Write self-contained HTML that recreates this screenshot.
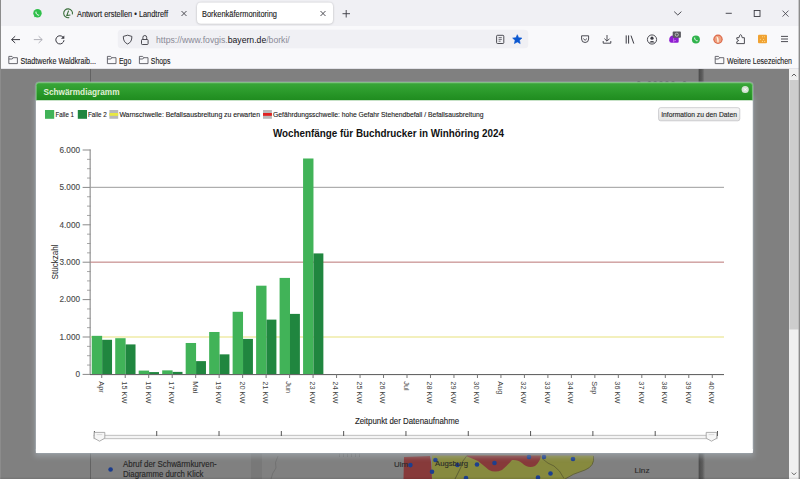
<!DOCTYPE html>
<html><head><meta charset="utf-8"><style>
html,body{margin:0;padding:0;width:800px;height:479px;overflow:hidden;background:#808080;font-family:"Liberation Sans", sans-serif;}
</style></head><body>
<svg width="800" height="479" viewBox="0 0 800 479" style='position:absolute;left:0;top:0;font-family:"Liberation Sans", sans-serif'><defs><filter id="tabsh" x="-10%" y="-30%" width="120%" height="160%"><feGaussianBlur stdDeviation="0.8"/></filter><filter id="msh" x="-5%" y="-5%" width="110%" height="110%"><feGaussianBlur stdDeviation="2.5"/></filter><linearGradient id="hdr" x1="0" y1="0" x2="0" y2="1"><stop offset="0" stop-color="#3aa83a"/><stop offset="0.5" stop-color="#2b9a2b"/><stop offset="1" stop-color="#1f8c1f"/></linearGradient><linearGradient id="btn" x1="0" y1="0" x2="0" y2="1"><stop offset="0" stop-color="#f8f8f8"/><stop offset="1" stop-color="#e4e4e4"/></linearGradient><linearGradient id="psh" x1="0" y1="0" x2="1" y2="0"><stop offset="0" stop-color="#5a5a5a"/><stop offset="0.15" stop-color="#4e4e4e"/><stop offset="0.6" stop-color="#5c5c5c"/><stop offset="1" stop-color="#7e7e7e"/></linearGradient></defs><rect x="0" y="0" width="800" height="26" fill="#f0f0f4"/><rect x="0" y="26" width="800" height="43" fill="#f9f9fb"/><rect x="0" y="68" width="800" height="1" fill="#e3e3e8"/><rect x="197" y="2.8" width="136" height="21.2" rx="4" fill="#000" opacity="0.25" filter="url(#tabsh)"/><rect x="197" y="2.6" width="136" height="21.2" rx="4" fill="#fff"/><circle cx="37.5" cy="13.3" r="4.2" fill="#2fbf4a"/><path d="M34.2 17.2 L34.9 14.8 L36.6 16.2 Z" fill="#2fbf4a"/><path d="M36 11.6 q-0.6 1.6 1.2 3 q1.4 1 2 0.4" stroke="#fff" stroke-width="1" fill="none"/><path d="M69.24 17.55 A4.4 4.4 0 1 1 72.35 14.44" fill="none" stroke="#3a6e3a" stroke-width="1.1"/><path d="M68.6 10.6 L66.8 15.6 L70.4 15.0" stroke="#3a6e3a" stroke-width="1.1" fill="none"/><text x="77" y="16.5" font-size="8.2" fill="#1c1b22" font-weight="normal" text-anchor="start" stroke="#1c1b22" stroke-width="0.12" textLength="91" lengthAdjust="spacingAndGlyphs" >Antwort erstellen • Landtreff</text><path d="M181.5 11 L186.5 16 M186.5 11 L181.5 16" stroke="#3a3a42" stroke-width="0.9"/><text x="202" y="16.5" font-size="8.2" fill="#1c1b22" font-weight="normal" text-anchor="start" stroke="#1c1b22" stroke-width="0.12" textLength="75" lengthAdjust="spacingAndGlyphs" >Borkenkäfermonitoring</text><path d="M320.5 11 L325.5 16 M325.5 11 L320.5 16" stroke="#3a3a42" stroke-width="0.9"/><path d="M342.5 13.7 L350 13.7 M346.2 10 L346.2 17.5" stroke="#3a3a42" stroke-width="0.9"/><path d="M674.2 11.6 L677.8 15 L681.4 11.6" stroke="#3a3a42" stroke-width="0.9" fill="none"/><path d="M725.7 13.3 L731.8 13.3" stroke="#3a3a42" stroke-width="0.9"/><rect x="754.2" y="10.5" width="5.8" height="6" fill="none" stroke="#3a3a42" stroke-width="0.9"/><path d="M782.5 10.6 L788.5 16.6 M788.5 10.6 L782.5 16.6" stroke="#3a3a42" stroke-width="0.8"/><path d="M20 39.6 L11.6 39.6 M15.2 36.2 L11.6 39.6 L15.2 43" stroke="#3a3a42" stroke-width="1" fill="none"/><path d="M33.8 39.6 L42.2 39.6 M38.6 36.2 L42.2 39.6 L38.6 43" stroke="#b0b0b8" stroke-width="1" fill="none"/><path d="M63.2 37.4 A4.1 4.1 0 1 0 64 40.2" stroke="#3a3a42" stroke-width="1" fill="none"/><path d="M64.3 35.4 L64.3 38.8 L60.9 38.8 Z" fill="#3a3a42"/><rect x="117.8" y="29.8" width="410.4" height="18.4" rx="3.5" fill="#f0f0f4"/><path d="M127.6 35.2 L123.3 36.4 Q123.2 42.2 127.6 44 Q132 42.2 131.9 36.4 Z" fill="none" stroke="#3a3a42" stroke-width="0.9"/><rect x="141.5" y="39.5" width="6.6" height="5" rx="0.8" fill="none" stroke="#3a3a42" stroke-width="0.9"/><path d="M142.9 39.5 L142.9 37.4 A1.9 1.9 0 0 1 146.7 37.4 L146.7 39.5" fill="none" stroke="#3a3a42" stroke-width="0.9"/><text x="156" y="42.5" font-size="8.7" fill="#8a8a96" textLength="133.8" lengthAdjust="spacingAndGlyphs">https://www.fovgis.<tspan fill="#15141a">bayern.de</tspan>/borki/</text><rect x="496.6" y="35.3" width="7.2" height="8.2" rx="0.9" fill="none" stroke="#3a3a42" stroke-width="0.9"/><path d="M498.6 37.6 L501.8 37.6 M498.6 39.4 L501.8 39.4 M498.6 41.2 L500.6 41.2" stroke="#3a3a42" stroke-width="0.7"/><polygon points="517.30,34.70 518.65,37.74 521.96,38.09 519.49,40.31 520.18,43.56 517.30,41.90 514.42,43.56 515.11,40.31 512.64,38.09 515.95,37.74" fill="#0b57d0" stroke="#0b57d0" stroke-width="0.6" stroke-linejoin="round"/><path d="M581.6 35.8 L588.6 35.8 L588.6 39 A3.5 3.5 0 0 1 581.6 39 Z" fill="none" stroke="#3a3a42" stroke-width="0.9" stroke-linejoin="round"/><path d="M583.3 38.6 L585.1 40.3 L586.9 38.6" fill="none" stroke="#3a3a42" stroke-width="0.9"/><path d="M607 35 L607 41 M604.4 38.6 L607 41.2 L609.6 38.6 M603.2 41 L603.2 43.2 L610.8 43.2 L610.8 41" fill="none" stroke="#3a3a42" stroke-width="0.9"/><path d="M626.2 35.4 L626.2 43.6 M628.6 35.4 L628.6 43.6 M631 35.6 L633.8 43.6" fill="none" stroke="#3a3a42" stroke-width="1"/><circle cx="652" cy="39.5" r="4.6" fill="none" stroke="#3a3a42" stroke-width="0.9"/><circle cx="652" cy="38.2" r="1.6" fill="#3a3a42"/><path d="M649.2 42.4 Q652 39.6 654.8 42.4 Z" fill="#3a3a42"/><path d="M669.2 40.2 Q669.2 35.6 673.2 35.6 L678.7 35.6 L678.7 41.4 Q678.7 42.7 677.4 42.7 L671.4 42.7 Q669.2 42.7 669.2 40.2 Z" fill="#8e1ed0"/><path d="M673.6 38.2 L673.6 42.4 M673.6 41 L676 40.4" stroke="#d888f4" stroke-width="0.7"/><rect x="672.7" y="31.6" width="8.2" height="6.2" rx="0.8" fill="#5a5a5f"/><circle cx="676.8" cy="34.7" r="1.6" fill="none" stroke="#d8d8d8" stroke-width="0.7"/><circle cx="695.9" cy="39.4" r="4" fill="#30b34c"/><path d="M694.7 37.5 q-0.5 1.6 1.1 2.9 q1.3 0.9 1.9 0.3" stroke="#fff" stroke-width="0.9" fill="none"/><circle cx="718" cy="39.2" r="4.7" fill="#dc6a4a"/><circle cx="718" cy="39.2" r="3.5" fill="#eea080"/><path d="M716.8 36.4 Q719.2 37.2 718.6 42.4 L717.4 42.4 Q717.2 38.8 716.4 36.8 Z" fill="#fff4e0"/><path d="M736.8 43.6 L744.4 43.6 L744.4 37.7 L742.2 37.7 L741.5 35.3 Q740.6 34 739.7 35.3 L739 37.7 L736.8 37.7 L736.8 39.3 L738.7 40.5 L736.8 41.7 Z" fill="none" stroke="#3a3a42" stroke-width="0.9" stroke-linejoin="round"/><rect x="758" y="34.7" width="9" height="8.6" rx="1" fill="#f0a232"/><circle cx="762.5" cy="36.8" r="0.55" fill="#ffdc90"/><circle cx="764.4" cy="36.8" r="0.55" fill="#ffdc90"/><circle cx="760.4" cy="39.3" r="0.55" fill="#ffdc90"/><circle cx="763.6" cy="39.5" r="0.55" fill="#ffdc90"/><circle cx="762.4" cy="41.4" r="0.55" fill="#ffdc90"/><circle cx="764.7" cy="41.4" r="0.55" fill="#ffdc90"/><path d="M781 36.4 L788 36.4 M781 39 L788 39 M781 41.6 L788 41.6" stroke="#3a3a42" stroke-width="0.9"/><path d="M8.8 63.6 L8.8 56.4 L12.0 56.4 L13.200000000000001 57.699999999999996 L17.4 57.699999999999996 L17.4 63.6 Z M8.8 59.0 L12.200000000000001 59.0 L13.200000000000001 57.699999999999996" fill="none" stroke="#505058" stroke-width="0.85" stroke-linejoin="round"/><text x="20.5" y="63.7" font-size="8.9" fill="#1c1b22" font-weight="normal" text-anchor="start" stroke="#1c1b22" stroke-width="0.12" textLength="75.5" lengthAdjust="spacingAndGlyphs" >Stadtwerke Waldkraib...</text><path d="M107.4 63.6 L107.4 56.4 L110.60000000000001 56.4 L111.80000000000001 57.699999999999996 L116.0 57.699999999999996 L116.0 63.6 Z M107.4 59.0 L110.80000000000001 59.0 L111.80000000000001 57.699999999999996" fill="none" stroke="#505058" stroke-width="0.85" stroke-linejoin="round"/><text x="118.9" y="63.7" font-size="8.9" fill="#1c1b22" font-weight="normal" text-anchor="start" stroke="#1c1b22" stroke-width="0.12" textLength="12.4" lengthAdjust="spacingAndGlyphs" >Ego</text><path d="M139.4 63.6 L139.4 56.4 L142.6 56.4 L143.8 57.699999999999996 L148.0 57.699999999999996 L148.0 63.6 Z M139.4 59.0 L142.8 59.0 L143.8 57.699999999999996" fill="none" stroke="#505058" stroke-width="0.85" stroke-linejoin="round"/><text x="150.8" y="63.7" font-size="8.9" fill="#1c1b22" font-weight="normal" text-anchor="start" stroke="#1c1b22" stroke-width="0.12" textLength="19.6" lengthAdjust="spacingAndGlyphs" >Shops</text><path d="M715.2 63.6 L715.2 56.4 L718.4000000000001 56.4 L719.6 57.699999999999996 L723.8000000000001 57.699999999999996 L723.8000000000001 63.6 Z M715.2 59.0 L718.6 59.0 L719.6 57.699999999999996" fill="none" stroke="#505058" stroke-width="0.85" stroke-linejoin="round"/><text x="727" y="63.7" font-size="8.9" fill="#1c1b22" font-weight="normal" text-anchor="start" stroke="#1c1b22" stroke-width="0.12" textLength="65" lengthAdjust="spacingAndGlyphs" >Weitere Lesezeichen</text><rect x="0" y="69" width="800" height="410" fill="#808080"/><rect x="90" y="69" width="0.8" height="14" fill="#5a5a5a"/><ellipse cx="638.8" cy="82.6" rx="1.9" ry="1.5" fill="#3c3c3c" opacity="0.75"/><ellipse cx="649.5" cy="82.6" rx="1.9" ry="1.5" fill="#3c3c3c" opacity="0.75"/><ellipse cx="655.2" cy="82.6" rx="1.9" ry="1.5" fill="#3c3c3c" opacity="0.75"/><ellipse cx="661" cy="82.6" rx="1.9" ry="1.5" fill="#3c3c3c" opacity="0.75"/><ellipse cx="667" cy="82.6" rx="1.9" ry="1.5" fill="#3c3c3c" opacity="0.75"/><ellipse cx="673" cy="82.6" rx="1.9" ry="1.5" fill="#3c3c3c" opacity="0.75"/><ellipse cx="684.5" cy="82.6" rx="1.9" ry="1.5" fill="#3c3c3c" opacity="0.75"/><rect x="698.5" y="69" width="6" height="14" fill="url(#psh)"/><rect x="90" y="453" width="0.8" height="26" fill="#5a5a5a"/><circle cx="110.6" cy="469.5" r="2.3" fill="#1b3c8c"/><text x="123" y="467.4" font-size="8.6" fill="#262626" font-weight="normal" text-anchor="start" stroke="#262626" stroke-width="0.12" textLength="93.7" lengthAdjust="spacingAndGlyphs" >Abruf der Schwärmkurven-</text><text x="123" y="477.4" font-size="8.6" fill="#262626" font-weight="normal" text-anchor="start" stroke="#262626" stroke-width="0.12" textLength="80.5" lengthAdjust="spacingAndGlyphs" >Diagramme durch Klick</text><rect x="251" y="453" width="11" height="26" fill="#787878"/><rect x="698.5" y="453" width="6.5" height="26" fill="url(#psh)"/><rect x="339" y="453.5" width="1" height="3.5" fill="#404040" opacity="0.25"/><rect x="343" y="453.5" width="1" height="3.5" fill="#404040" opacity="0.25"/><rect x="347" y="453.5" width="1" height="3.5" fill="#404040" opacity="0.25"/><rect x="351" y="453.5" width="1" height="3.5" fill="#404040" opacity="0.25"/><rect x="355" y="453.5" width="1" height="3.5" fill="#404040" opacity="0.25"/><rect x="359" y="453.5" width="1" height="3.5" fill="#404040" opacity="0.25"/><path d="M432 479 L432 455.5 L593.5 455.5 Q595 466 585 470 Q572 474 565 479 Z" fill="#878a3e"/><path d="M403.5 479 L404 457 L430 456 L431 462 L432 479 Z" fill="#873a3a"/><path d="M467 455.5 L541 455.5 Q540 462 535 466 Q528 469 522 463 Q518 459.5 512 460 Q507 466 502 470 Q495 473 489 470 Q483 465 478 461 Q472 458 467 456.5 Z" fill="#873a3a"/><path d="M542 458.5 Q548 464 554 466 Q560 470 564 478.5" stroke="#5a5a30" stroke-width="0.8" fill="none"/><path d="M593.5 456 Q595 466 585 470 Q572 474 565 479" stroke="#5a5a30" stroke-width="0.8" fill="none"/><path d="M467 455.5 Q461 462 461 467 Q458 473 455 479" stroke="#4a4a30" stroke-width="0.7" fill="none"/><path d="M278 456 Q274 463 276 468 Q272 473 271 479" stroke="#6a6a6a" stroke-width="0.7" fill="none"/><circle cx="410.4" cy="465.1" r="2.3" fill="#1d3f8e"/><circle cx="435.4" cy="460" r="2.3" fill="#1d3f8e"/><circle cx="432" cy="471.7" r="2.3" fill="#1d3f8e"/><circle cx="457.5" cy="465" r="2.3" fill="#1d3f8e"/><circle cx="477" cy="464.5" r="2.3" fill="#1d3f8e"/><circle cx="494.5" cy="463" r="2.3" fill="#1d3f8e"/><circle cx="466" cy="478" r="2.3" fill="#1d3f8e"/><circle cx="529" cy="457" r="2.3" fill="#1d3f8e"/><circle cx="544" cy="457" r="2.3" fill="#1d3f8e"/><circle cx="573" cy="459" r="2.3" fill="#1d3f8e"/><circle cx="550.5" cy="473.5" r="2.3" fill="#1d3f8e"/><circle cx="538" cy="477.5" r="2.3" fill="#1d3f8e"/><text x="394" y="467.2" font-size="8" fill="#2a2a2a" font-weight="normal" text-anchor="start" stroke="#2a2a2a" stroke-width="0.12" textLength="14" lengthAdjust="spacingAndGlyphs" >Ulm</text><text x="435" y="466.4" font-size="8" fill="#2a2a2a" font-weight="normal" text-anchor="start" stroke="#2a2a2a" stroke-width="0.12" textLength="33" lengthAdjust="spacingAndGlyphs" >Augsburg</text><text x="634.5" y="473.2" font-size="8" fill="#2a2a2a" font-weight="normal" text-anchor="start" stroke="#2a2a2a" stroke-width="0.12" textLength="15" lengthAdjust="spacingAndGlyphs" >Linz</text><rect x="789" y="69" width="10" height="410" fill="#f0f0f0"/><rect x="789.4" y="80" width="9.2" height="249.5" fill="#cdcdcd"/><path d="M791.8 76.2 L794 74 L796.2 76.2" stroke="#505050" stroke-width="0.9" fill="none"/><path d="M791.8 472.6 L794 474.8 L796.2 472.6" stroke="#505050" stroke-width="0.9" fill="none"/><rect x="798.6" y="0" width="1.4" height="479" fill="#8c8c8c"/><rect x="0" y="0" width="1" height="479" fill="#8c8c8c"/><rect x="0" y="477.6" width="800" height="1.4" fill="#000" opacity="0.08"/><rect x="34.4" y="96.4" width="719.9" height="360.6" fill="#a8b0b8" opacity="0.5" filter="url(#msh)"/><rect x="35.3" y="81.80000000000001" width="718.1" height="371.8" rx="3.5" fill="none" stroke="#9aa4ac" stroke-width="0.8" opacity="0.8"/><rect x="35.9" y="82.4" width="716.9" height="370.6" rx="3" fill="#fff"/><rect x="35.9" y="449" width="716.9" height="4" fill="#fff"/><path d="M35.9 100.2 L35.9 85.4 Q35.9 82.4 38.9 82.4 L749.8 82.4 Q752.8 82.4 752.8 85.4 L752.8 100.2 Z" fill="url(#hdr)"/><path d="M36.3 100.2 L36.3 85.4 Q36.3 82.80000000000001 38.9 82.80000000000001 L749.8 82.80000000000001 Q752.4 82.80000000000001 752.4 85.4 L752.4 100.2" fill="none" stroke="#86c886" stroke-width="0.8"/><text x="43.5" y="94.9" font-size="8.7" fill="#e0efd6" font-weight="bold" text-anchor="start" stroke="#e0efd6" stroke-width="0.0" textLength="76" lengthAdjust="spacingAndGlyphs" >Schwärmdiagramm</text><circle cx="745.2" cy="89.5" r="3.6" fill="#d4e4d4"/><path d="M743.9 88.2 L746.5 90.8 M746.5 88.2 L743.9 90.8" stroke="#ffffff" stroke-width="0.9"/><rect x="45" y="110" width="9.2" height="8.8" fill="#41b358"/><text x="55.6" y="116.6" font-size="7.5" fill="#1a1a1a" font-weight="normal" text-anchor="start" stroke="#1a1a1a" stroke-width="0.12" textLength="18.4" lengthAdjust="spacingAndGlyphs" >Falle 1</text><rect x="77.8" y="110" width="9.2" height="8.8" fill="#20863f"/><text x="88" y="116.6" font-size="7.5" fill="#1a1a1a" font-weight="normal" text-anchor="start" stroke="#1a1a1a" stroke-width="0.12" textLength="18.8" lengthAdjust="spacingAndGlyphs" >Falle 2</text><rect x="109.4" y="110" width="8.8" height="8.8" fill="#b8b8b8"/><rect x="109.4" y="113" width="8.8" height="2.8" fill="#e8e840"/><text x="119.4" y="116.6" font-size="7.5" fill="#1a1a1a" font-weight="normal" text-anchor="start" stroke="#1a1a1a" stroke-width="0.12" textLength="140.6" lengthAdjust="spacingAndGlyphs" >Warnschwelle: Befallsausbreitung zu erwarten</text><rect x="263" y="110" width="8.9" height="8.8" fill="#b8b8b8"/><rect x="263" y="113" width="8.9" height="2.8" fill="#e02020"/><text x="273" y="116.6" font-size="7.5" fill="#1a1a1a" font-weight="normal" text-anchor="start" stroke="#1a1a1a" stroke-width="0.12" textLength="210.5" lengthAdjust="spacingAndGlyphs" >Gefährdungsschwelle: hohe Gefahr Stehendbefall / Befallsausbreitung</text><rect x="658.6" y="107.7" width="81.2" height="13.1" rx="2" fill="url(#btn)" stroke="#bcbcc0" stroke-width="0.7"/><text x="661.2" y="116.9" font-size="7.3" fill="#1e1e1e" font-weight="normal" text-anchor="start" stroke="#1e1e1e" stroke-width="0.12" textLength="75.8" lengthAdjust="spacingAndGlyphs" >Information zu den Daten</text><text x="273" y="137.2" font-size="10.5" fill="#111" font-weight="bold" text-anchor="start" stroke="#111" stroke-width="0.0" textLength="231" lengthAdjust="spacingAndGlyphs" >Wochenfänge für Buchdrucker in Winhöring 2024</text><rect x="82.6" y="373.90" width="8" height="1" fill="#8a8a8a"/><text x="80.0" y="377.2" font-size="8.2" fill="#4a4a4a" font-weight="normal" text-anchor="end" stroke="#4a4a4a" stroke-width="0.12" >0</text><rect x="87" y="364.55" width="3.6" height="1" fill="#a8a8a8"/><rect x="87" y="355.20" width="3.6" height="1" fill="#a8a8a8"/><rect x="87" y="345.85" width="3.6" height="1" fill="#a8a8a8"/><rect x="82.6" y="336.50" width="8" height="1" fill="#8a8a8a"/><text x="80.0" y="339.8" font-size="8.2" fill="#4a4a4a" font-weight="normal" text-anchor="end" stroke="#4a4a4a" stroke-width="0.12" >1.000</text><rect x="87" y="327.15" width="3.6" height="1" fill="#a8a8a8"/><rect x="87" y="317.80" width="3.6" height="1" fill="#a8a8a8"/><rect x="87" y="308.45" width="3.6" height="1" fill="#a8a8a8"/><rect x="82.6" y="299.10" width="8" height="1" fill="#8a8a8a"/><text x="80.0" y="302.4" font-size="8.2" fill="#4a4a4a" font-weight="normal" text-anchor="end" stroke="#4a4a4a" stroke-width="0.12" >2.000</text><rect x="87" y="289.75" width="3.6" height="1" fill="#a8a8a8"/><rect x="87" y="280.40" width="3.6" height="1" fill="#a8a8a8"/><rect x="87" y="271.05" width="3.6" height="1" fill="#a8a8a8"/><rect x="82.6" y="261.70" width="8" height="1" fill="#8a8a8a"/><text x="80.0" y="265.0" font-size="8.2" fill="#4a4a4a" font-weight="normal" text-anchor="end" stroke="#4a4a4a" stroke-width="0.12" >3.000</text><rect x="87" y="252.35" width="3.6" height="1" fill="#a8a8a8"/><rect x="87" y="243.00" width="3.6" height="1" fill="#a8a8a8"/><rect x="87" y="233.65" width="3.6" height="1" fill="#a8a8a8"/><rect x="82.6" y="224.30" width="8" height="1" fill="#8a8a8a"/><text x="80.0" y="227.6" font-size="8.2" fill="#4a4a4a" font-weight="normal" text-anchor="end" stroke="#4a4a4a" stroke-width="0.12" >4.000</text><rect x="87" y="214.95" width="3.6" height="1" fill="#a8a8a8"/><rect x="87" y="205.60" width="3.6" height="1" fill="#a8a8a8"/><rect x="87" y="196.25" width="3.6" height="1" fill="#a8a8a8"/><rect x="82.6" y="186.90" width="8" height="1" fill="#8a8a8a"/><text x="80.0" y="190.20000000000002" font-size="8.2" fill="#4a4a4a" font-weight="normal" text-anchor="end" stroke="#4a4a4a" stroke-width="0.12" >5.000</text><rect x="87" y="177.55" width="3.6" height="1" fill="#a8a8a8"/><rect x="87" y="168.20" width="3.6" height="1" fill="#a8a8a8"/><rect x="87" y="158.85" width="3.6" height="1" fill="#a8a8a8"/><rect x="82.6" y="149.50" width="8" height="1" fill="#8a8a8a"/><text x="80.0" y="152.8" font-size="8.2" fill="#4a4a4a" font-weight="normal" text-anchor="end" stroke="#4a4a4a" stroke-width="0.12" >6.000</text><rect x="89.6" y="149.50" width="1.1" height="225.40" fill="#8a8a8a"/><text x="0" y="0" font-size="8.8" fill="#222" textLength="35" lengthAdjust="spacingAndGlyphs" text-anchor="middle" transform="translate(58.3 261.9) rotate(-90)">Stückzahl</text><rect x="90.5" y="186.80" width="633.5" height="1.1" fill="#a6a6a6"/><rect x="90.5" y="261.60" width="633.5" height="1.1" fill="#c08282"/><rect x="90.5" y="336.40" width="633.5" height="1.2" fill="#ebe692"/><rect x="91.74" y="335.84" width="10.4" height="38.56" fill="#41b358"/><rect x="102.14" y="339.80" width="9.9" height="34.60" fill="#20863f"/><rect x="115.22" y="338.20" width="10.4" height="36.20" fill="#41b358"/><rect x="125.62" y="344.41" width="9.9" height="29.99" fill="#20863f"/><rect x="138.70" y="370.59" width="10.4" height="3.81" fill="#41b358"/><rect x="149.10" y="372.08" width="9.9" height="2.32" fill="#20863f"/><rect x="162.19" y="370.36" width="10.4" height="4.04" fill="#41b358"/><rect x="172.59" y="371.89" width="9.9" height="2.51" fill="#20863f"/><rect x="185.67" y="342.98" width="10.4" height="31.42" fill="#41b358"/><rect x="196.07" y="361.12" width="9.9" height="13.28" fill="#20863f"/><rect x="209.15" y="331.99" width="10.4" height="42.41" fill="#41b358"/><rect x="219.55" y="354.35" width="9.9" height="20.05" fill="#20863f"/><rect x="232.63" y="311.79" width="10.4" height="62.61" fill="#41b358"/><rect x="243.03" y="338.91" width="9.9" height="35.49" fill="#20863f"/><rect x="256.11" y="285.69" width="10.4" height="88.71" fill="#41b358"/><rect x="266.51" y="319.61" width="9.9" height="54.79" fill="#20863f"/><rect x="279.59" y="277.91" width="10.4" height="96.49" fill="#41b358"/><rect x="289.99" y="313.89" width="9.9" height="60.51" fill="#20863f"/><rect x="303.07" y="158.49" width="10.4" height="215.91" fill="#41b358"/><rect x="313.47" y="253.41" width="9.9" height="120.99" fill="#20863f"/><rect x="90.0" y="374.0" width="634.0" height="1.1" fill="#666"/><rect x="101.24" y="374.4" width="1" height="3.6" fill="#777"/><text x="0" y="0" font-size="7.4" fill="#404040" transform="translate(98.64 381.3) rotate(90)">Apr</text><rect x="124.72" y="374.4" width="1" height="3.6" fill="#777"/><text x="0" y="0" font-size="7.4" fill="#404040" transform="translate(122.12 381.3) rotate(90)">15 KW</text><rect x="148.20" y="374.4" width="1" height="3.6" fill="#777"/><text x="0" y="0" font-size="7.4" fill="#404040" transform="translate(145.60 381.3) rotate(90)">16 KW</text><rect x="171.69" y="374.4" width="1" height="3.6" fill="#777"/><text x="0" y="0" font-size="7.4" fill="#404040" transform="translate(169.09 381.3) rotate(90)">17 KW</text><rect x="195.17" y="374.4" width="1" height="3.6" fill="#777"/><text x="0" y="0" font-size="7.4" fill="#404040" transform="translate(192.57 381.3) rotate(90)">Mai</text><rect x="218.65" y="374.4" width="1" height="3.6" fill="#777"/><text x="0" y="0" font-size="7.4" fill="#404040" transform="translate(216.05 381.3) rotate(90)">19 KW</text><rect x="242.13" y="374.4" width="1" height="3.6" fill="#777"/><text x="0" y="0" font-size="7.4" fill="#404040" transform="translate(239.53 381.3) rotate(90)">20 KW</text><rect x="265.61" y="374.4" width="1" height="3.6" fill="#777"/><text x="0" y="0" font-size="7.4" fill="#404040" transform="translate(263.01 381.3) rotate(90)">21 KW</text><rect x="289.09" y="374.4" width="1" height="3.6" fill="#777"/><text x="0" y="0" font-size="7.4" fill="#404040" transform="translate(286.49 381.3) rotate(90)">Jun</text><rect x="312.57" y="374.4" width="1" height="3.6" fill="#777"/><text x="0" y="0" font-size="7.4" fill="#404040" transform="translate(309.97 381.3) rotate(90)">23 KW</text><rect x="336.06" y="374.4" width="1" height="3.6" fill="#777"/><text x="0" y="0" font-size="7.4" fill="#404040" transform="translate(333.46 381.3) rotate(90)">24 KW</text><rect x="359.54" y="374.4" width="1" height="3.6" fill="#777"/><text x="0" y="0" font-size="7.4" fill="#404040" transform="translate(356.94 381.3) rotate(90)">25 KW</text><rect x="383.02" y="374.4" width="1" height="3.6" fill="#777"/><text x="0" y="0" font-size="7.4" fill="#404040" transform="translate(380.42 381.3) rotate(90)">26 KW</text><rect x="406.50" y="374.4" width="1" height="3.6" fill="#777"/><text x="0" y="0" font-size="7.4" fill="#404040" transform="translate(403.90 381.3) rotate(90)">Jul</text><rect x="429.98" y="374.4" width="1" height="3.6" fill="#777"/><text x="0" y="0" font-size="7.4" fill="#404040" transform="translate(427.38 381.3) rotate(90)">28 KW</text><rect x="453.46" y="374.4" width="1" height="3.6" fill="#777"/><text x="0" y="0" font-size="7.4" fill="#404040" transform="translate(450.86 381.3) rotate(90)">29 KW</text><rect x="476.94" y="374.4" width="1" height="3.6" fill="#777"/><text x="0" y="0" font-size="7.4" fill="#404040" transform="translate(474.34 381.3) rotate(90)">30 KW</text><rect x="500.43" y="374.4" width="1" height="3.6" fill="#777"/><text x="0" y="0" font-size="7.4" fill="#404040" transform="translate(497.83 381.3) rotate(90)">Aug</text><rect x="523.91" y="374.4" width="1" height="3.6" fill="#777"/><text x="0" y="0" font-size="7.4" fill="#404040" transform="translate(521.31 381.3) rotate(90)">32 KW</text><rect x="547.39" y="374.4" width="1" height="3.6" fill="#777"/><text x="0" y="0" font-size="7.4" fill="#404040" transform="translate(544.79 381.3) rotate(90)">33 KW</text><rect x="570.87" y="374.4" width="1" height="3.6" fill="#777"/><text x="0" y="0" font-size="7.4" fill="#404040" transform="translate(568.27 381.3) rotate(90)">34 KW</text><rect x="594.35" y="374.4" width="1" height="3.6" fill="#777"/><text x="0" y="0" font-size="7.4" fill="#404040" transform="translate(591.75 381.3) rotate(90)">Sep</text><rect x="617.83" y="374.4" width="1" height="3.6" fill="#777"/><text x="0" y="0" font-size="7.4" fill="#404040" transform="translate(615.23 381.3) rotate(90)">36 KW</text><rect x="641.31" y="374.4" width="1" height="3.6" fill="#777"/><text x="0" y="0" font-size="7.4" fill="#404040" transform="translate(638.71 381.3) rotate(90)">37 KW</text><rect x="664.80" y="374.4" width="1" height="3.6" fill="#777"/><text x="0" y="0" font-size="7.4" fill="#404040" transform="translate(662.20 381.3) rotate(90)">38 KW</text><rect x="688.28" y="374.4" width="1" height="3.6" fill="#777"/><text x="0" y="0" font-size="7.4" fill="#404040" transform="translate(685.68 381.3) rotate(90)">39 KW</text><rect x="711.76" y="374.4" width="1" height="3.6" fill="#777"/><text x="0" y="0" font-size="7.4" fill="#404040" transform="translate(709.16 381.3) rotate(90)">40 KW</text><text x="354.9" y="423.9" font-size="9" fill="#1e1e1e" font-weight="normal" text-anchor="start" stroke="#1e1e1e" stroke-width="0.12" textLength="104.2" lengthAdjust="spacingAndGlyphs" >Zeitpunkt der Datenaufnahme</text><rect x="94" y="435.3" width="623" height="3.4" fill="#f4f4f4" stroke="#b8b8b8" stroke-width="0.9"/><rect x="93.90" y="431" width="1" height="5" fill="#555"/><rect x="156.21" y="431" width="1" height="5" fill="#555"/><rect x="218.52" y="431" width="1" height="5" fill="#555"/><rect x="280.83" y="431" width="1" height="5" fill="#555"/><rect x="343.14" y="431" width="1" height="5" fill="#555"/><rect x="405.45" y="431" width="1" height="5" fill="#555"/><rect x="467.76" y="431" width="1" height="5" fill="#555"/><rect x="530.07" y="431" width="1" height="5" fill="#555"/><rect x="592.38" y="431" width="1" height="5" fill="#555"/><rect x="654.69" y="431" width="1" height="5" fill="#555"/><rect x="717.00" y="431" width="1" height="5" fill="#555"/><path d="M94.2 432.4 L104.8 432.4 L104.8 438.2 L99.5 441.2 L94.2 438.2 Z" fill="#f6f6f6" stroke="#9a9a9a" stroke-width="0.8"/><path d="M96.7 434.6 L102.3 434.6" stroke="#c8c8c8" stroke-width="0.6"/><path d="M706.2 432.4 L716.8000000000001 432.4 L716.8000000000001 438.2 L711.5 441.2 L706.2 438.2 Z" fill="#f6f6f6" stroke="#9a9a9a" stroke-width="0.8"/><path d="M708.7 434.6 L714.3000000000001 434.6" stroke="#c8c8c8" stroke-width="0.6"/></svg>
</body></html>
